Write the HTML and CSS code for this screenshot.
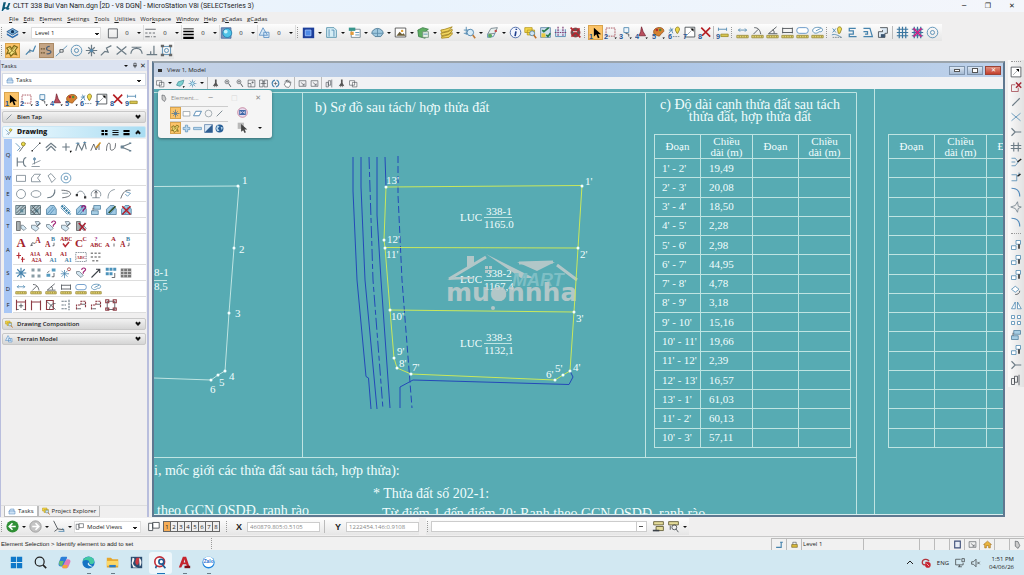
FILE: index.html
```html
<!DOCTYPE html>
<html lang="vi">
<head>
<meta charset="utf-8">
<title>CLTT 338 Bui Van Nam.dgn [2D - V8 DGN] - MicroStation V8i (SELECTseries 3)</title>
<link rel="stylesheet" href="styles.css">
</head>
<body>
<svg class="sprite" aria-hidden="true">
<symbol id="logo" viewBox="0 0 16 16"><path fill="#0b5a78" d="M4 2h4L6 9c1 2 3 1 4-1l2-5h3l-3 8 2 1-2 2H9l-1-2-3 1-2 3H1z"/></symbol>
<symbol id="level" viewBox="0 0 16 16"><path fill="#7fb6dd" stroke="#1f4f86" d="M1 7l7-4 7 4-7 4z"/><path fill="#2b6cb0" d="M1 9l7 4 7-4v2l-7 4-7-4z"/><circle cx="8" cy="7" r="2" fill="#12355c"/></symbol>
<symbol id="sq" viewBox="0 0 16 16"><path class="k" fill="#fff" d="M2.500 2.500h12v12h-12z"/></symbol>
<symbol id="dash" viewBox="0 0 16 16"><path class="k" d="M1 3h14"/><path class="k" stroke-dasharray="3 2" d="M1 8h14"/><path class="k" stroke-dasharray="6 2 1 2" d="M1 13h14"/></symbol>
<symbol id="thick" viewBox="0 0 16 16"><path d="M1 2h14v1H1zM1 5h14v2H1zM1 9h14v2H1zM1 13h14v3H1z"/></symbol>
<symbol id="sphere" viewBox="0 0 16 16"><path fill="#7c93bb" stroke="#42659c" d="M1 1h13v14H1z"/><circle cx="9" cy="8" r="6" fill="#4fc3e8" stroke="#1a78a8"/><circle cx="7" cy="6" r="2.500" fill="#c8f2fb"/></symbol>
<symbol id="tri" viewBox="0 0 16 16"><path fill="#d7e8f7" stroke="#4d86bf" d="M6 1l6 10H1zM7 7h7v7H7z"/></symbol>
<symbol id="cube" viewBox="0 0 16 16"><path fill="#1d3f9b" d="M1 2h14v13H1z"/><path fill="#4f8be8" stroke="#a4c9ff" d="M4 5h7v7H4z"/></symbol>
<symbol id="doc" viewBox="0 0 16 16"><path fill="#d6eef6" stroke="#4c8ca8" d="M2 2h9l3 3v9H2z"/><path class="b" d="M5 4v9M8 5h3v8"/></symbol>
<symbol id="refs" viewBox="0 0 16 16"><path fill="#fff" stroke="#6b7f8a" d="M4 4h11v10H4z"/><path fill="#38958c" d="M1 2h8v4H1z"/><path fill="#e39b3c" d="M3 7h4v4H3z"/><path class="b" d="M9 8h5M9 11h5"/></symbol>
<symbol id="globe" viewBox="0 0 16 16"><path fill="#9fc8df" stroke="#42718e" d="M1 9c0-3 3-6 7-6s7 3 7 6l-3 4H5z"/><path stroke="#5d8ba8" fill="none" d="M1 9h14M8 3v10"/></symbol>
<symbol id="img" viewBox="0 0 16 16"><path fill="#fff" stroke="#444" d="M1.500 2.500h13v11h-13z"/><path fill="#6b5d36" d="M3 12l4-5 3 3 2-1 2 3z"/><circle cx="10" cy="6" r="1.500" fill="#e0a23a"/></symbol>
<symbol id="green" viewBox="0 0 16 16"><path fill="#5fae62" stroke="#377c45" d="M1 5l6-3 7 2-4 3v8l-8-2z"/><path fill="#eaf4e8" stroke="#6f8f76" d="M7 7h7v7H7z"/><path class="b" d="M8 10h5"/></symbol>
<symbol id="layers" viewBox="0 0 16 16"><path fill="#f1d65f" stroke="#a3821a" d="M1 5l5-1 9-3-4 5-9 2zM1 9l9-2 5-3v2l-4 4-9 2zM2 13l8-2 5-3v2l-4 4-9 1z"/></symbol>
<symbol id="mag" viewBox="0 0 16 16"><path class="b" d="M1 5h9M4 1v10M1 9h4"/><circle cx="9" cy="8" r="4" fill="#d9ecf7" stroke="#3c78a6"/><path stroke="#c07a35" stroke-width="2" d="M12 11l3 4"/></symbol>
<symbol id="flag" viewBox="0 0 16 16"><path fill="#e6f0ee" stroke="#6c7b85" d="M2 10l4-7 8-1-3 7z"/><path class="b" d="M2 10v4l7-1 2-4"/><circle cx="5" cy="12" r="2.500" fill="#5fa85e"/><circle cx="12" cy="6" r="1.500" fill="#c34e4e"/></symbol>
<symbol id="info" viewBox="0 0 16 16"><circle cx="8" cy="8" r="6.500" fill="#f2f6ff" stroke="#37599d"/><path stroke="#1f3f8e" stroke-width="2" d="M8.500 6.500l-1 6M9 3.500v1.500"/></symbol>
<symbol id="ylook" viewBox="0 0 16 16"><path fill="#f5d84c" stroke="#b99a1c" d="M1 2h9v6H1zM4 5h9v6H4z"/><circle cx="10" cy="9" r="3" fill="#cfe4f3" stroke="#5283aa"/><path stroke="#c0722a" stroke-width="2" d="M12 11l3 4"/></symbol>
<symbol id="cells" viewBox="0 0 16 16"><path fill="#cfe0f0" stroke="#5d82a6" d="M2 2h12v12H2z"/><path fill="#e8ca43" d="M3 9h5v5H3z"/><path stroke="#267a4a" fill="none" stroke-width="2" d="M4 5l2 2 6-5M9 11l2 2 3-4"/></symbol>
<symbol id="fence" viewBox="0 0 16 16"><path fill="#dfe9f5" stroke="#4683ad" d="M2 4v9h12V4"/><path stroke="#7c3d75" stroke-width="1.500" fill="none" stroke-dasharray="2 1" d="M5 1v12M11 1v12M1 8h14"/></symbol>
<symbol id="noent" viewBox="0 0 16 16"><circle cx="8" cy="8" r="5.500" fill="#675353" stroke="#96252b"/><path stroke="#b8222b" stroke-width="2" d="M2 2l12 12M13 3L3 13"/><path stroke="#fff" d="M5 7h5"/></symbol>
<symbol id="n1" viewBox="0 0 16 16"><path d="M6 2v11l3-3 2 5 2-1-2-4h4z"/><text class="num" x="0" y="16">1</text></symbol>
<symbol id="n2" viewBox="0 0 16 16"><path class="r" stroke-dasharray="2 1" d="M2.500 2.500h11v10h-11z"/><text class="num" x="0" y="16">2</text><path d="M13 14h3l-2 2z"/></symbol>
<symbol id="n3" viewBox="0 0 16 16"><path fill="#eef5fb" stroke="#4683ad" d="M6 2h6v6H6z"/><path class="k" d="M8 9l4 1v3"/><text class="num" x="0" y="16">3</text><path d="M13 14h3l-2 2z"/></symbol>
<symbol id="n4" viewBox="0 0 16 16"><path fill="#ba4f5d" stroke="#7c2838" d="M8 1l2 6 3 5H5l2-5z"/><text class="num" x="0" y="16">4</text><path d="M13 14h3l-2 2z"/></symbol>
<symbol id="n5" viewBox="0 0 16 16"><path fill="#d68231" stroke="#95521c" d="M2 7c0-5 9-7 12-3 2 4-2 4-3 6s-2 3-4 2-5-1-5-5z"/><circle cx="6" cy="5" r="1.500" fill="#b52a30"/><circle cx="10" cy="5" r="1.500" fill="#4b8a3c"/><text class="num" x="0" y="16">5</text><path d="M13 14h3l-2 2z"/></symbol>
<symbol id="n6" viewBox="0 0 16 16"><path class="b" d="M1 5h5M3 2l3 7M1 9l5-6"/><path fill="#ecd84a" stroke="#8e7d22" d="M9 5c0-5 6-5 5 0l-2 4h-1z"/><path class="g" stroke-dasharray="2 1" d="M6 13h8"/><text class="num" x="0" y="16">6</text></symbol>
<symbol id="n7" viewBox="0 0 16 16"><path fill="#fff" stroke="#3c4248" d="M2.500 1.500h12v12h-12z"/><path class="k" stroke-dasharray="1 1" d="M5 11l6-6"/><path d="M9 3h4v4z"/><text class="num" x="0" y="16">7</text></symbol>
<symbol id="side7" viewBox="0 0 16 16"><path fill="#fff" stroke="#3c4248" d="M1.500 1.500h13v13h-13z"/><path class="k" stroke-dasharray="1 1" d="M4 12l7-7"/><path d="M8 4h4v4z"/></symbol>
<symbol id="n8" viewBox="0 0 16 16"><path stroke="#b51d22" stroke-width="2" d="M4 2l11 11M15 2L5 12"/><text class="num" x="0" y="16">8</text></symbol>
<symbol id="n9" viewBox="0 0 16 16"><path class="b" d="M3 4h10M3 2v4M13 2v4"/><path fill="#d9c64e" stroke="#9b8a28" d="M6 10h9v3H6z"/><text class="num" x="0" y="16">9</text></symbol>
<symbol id="rule" viewBox="0 0 16 16"><path fill="#e8d873" stroke="#968738" d="M1 11.500h14v3H1z"/><path stroke="#968738" d="M4 12v2M7 12v2M10 12v2M13 12v2"/></symbol>
<symbol id="m1" viewBox="0 0 16 16"><path class="b" d="M3 5h10M5 3L3 5l2 2M11 3l2 2-2 2"/><use href="#rule"/></symbol>
<symbol id="m2" viewBox="0 0 16 16"><path class="k" d="M4 2c5 0 7 3 8 8M3 10l6-6"/><use href="#rule"/></symbol>
<symbol id="m3" viewBox="0 0 16 16"><path class="k" d="M13 1L3 9.500h11M8 5c2 0 2 2 2 4"/><use href="#rule"/></symbol>
<symbol id="m4" viewBox="0 0 16 16"><path class="k" d="M2 2v7M14 2v7M2 3h12M2 8h12"/><use href="#rule"/></symbol>
<symbol id="m5" viewBox="0 0 16 16"><rect x="1" y="2" width="14" height="7" rx="3" fill="#fff" stroke="#4d86bf"/><use href="#rule"/></symbol>
<symbol id="m6" viewBox="0 0 16 16"><path fill="#fff" stroke="#4683ad" d="M2 6c0-4 5-5 10-4 4 2 2 6-2 5-3 3-7 2-8-1zM6 6l6-3"/><use href="#rule"/></symbol>
<symbol id="bulb" viewBox="0 0 16 16"><path class="b" d="M2 3l4 5M6 3L2 8M1 11c4-2 8 1 12 3"/><path fill="#efdd55" stroke="#8e7d22" d="M8 4c0-4 5-4 5 0l-2 5H9z"/><path class="g" stroke-dasharray="2 1" d="M2 14h11"/></symbol>
<symbol id="e1" viewBox="0 0 16 16"><path class="b" stroke-width="1.500" d="M12 3H4v3h5v4H4v3h9"/></symbol>
<symbol id="e2" viewBox="0 0 16 16"><path class="b" stroke-width="1.500" d="M3 3h8l3 10H3M3 7h5v3H5"/></symbol>
<symbol id="e3" viewBox="0 0 16 16"><path fill="#dce9f4" stroke="#3c4248" d="M5 2h9v7h-3v5H3V7h5V5"/><path d="M6 10h5v4H6z" fill="#3c5570"/></symbol>
<symbol id="grid" viewBox="0 0 16 16"><path stroke="#39759f" stroke-width="1.500" d="M4 1v14M8 1v14M12 1v14M1 4h14M1 8h14M1 12h14"/></symbol>
<symbol id="gridx" viewBox="0 0 16 16"><use href="#grid"/><path stroke="#c82488" stroke-width="2" d="M3 3l10 10M13 3L3 13"/></symbol>
<symbol id="target" viewBox="0 0 16 16"><circle class="b" cx="8" cy="8" r="6.500"/><circle class="b" cx="8" cy="8" r="2.500"/></symbol>
<symbol id="s1" viewBox="0 0 16 16"><path stroke="#806a19" stroke-width="1.500" fill="#f5e47f" d="M1 5l4-2 2 3 3-4 4 2-3 4 2 5-4-1-3 3-2-4-3 1 2-4z"/><path stroke="#806a19" d="M4 5l8 7M11 4l-7 8"/></symbol>
<symbol id="s2" viewBox="0 0 16 16"><path class="b" stroke-width="1.500" d="M1 13l5-5 4 1 3-7"/><path class="g" d="M6 6v5"/></symbol>
<symbol id="s3" viewBox="0 0 16 16"><path stroke="#67502e" fill="none" stroke-dasharray="2 1" stroke-width="1.500" d="M1 6h5M1 11h6"/><path stroke="#4b5f78" fill="none" stroke-width="1.500" d="M12 3c-5 0-5 5-1 5s3 5-3 4"/></symbol>
<symbol id="s4" viewBox="0 0 16 16"><path class="b" d="M1 15L15 2"/><path fill="#fff" stroke="#3c4248" d="M6 7h4v3H6z"/></symbol>
<symbol id="s6" viewBox="0 0 16 16"><path class="g" stroke-width="1.500" d="M8 1v14M1 8h14M4 4l8 8M12 4l-8 8"/><circle cx="8" cy="8" r="2" fill="#4f87ae"/></symbol>
<symbol id="s7" viewBox="0 0 16 16"><path class="g" stroke-width="1.500" d="M1 14l5-5 4 1-2-5 6-3"/></symbol>
<symbol id="s8" viewBox="0 0 16 16"><path class="g" stroke-width="1.500" d="M2 3l12 10M14 3L2 13"/></symbol>
<symbol id="s9" viewBox="0 0 16 16"><path class="g" stroke-width="1.500" d="M1 12c1-9 13-9 14 0M2 4h12"/></symbol>
<symbol id="s10" viewBox="0 0 16 16"><path class="g" stroke-width="1.500" d="M11 2v11M2 13h13M7 9v4"/></symbol>
<symbol id="s11" viewBox="0 0 16 16"><path class="b" d="M3 3h10v10H3z"/><circle class="b" cx="8" cy="8" r="2.500"/><path fill="#666" d="M1 1h4v3H1zM11 1h4v3h-4zM1 12h4v3H1zM11 12h4v3h-4z"/></symbol>
<symbol id="line" viewBox="0 0 16 16"><path class="g" stroke-width="1.500" d="M3 13L13 3"/></symbol>
<symbol id="pen" viewBox="0 0 16 16"><path class="b" d="M1 3l6 6-4 4"/><path class="k" d="M6 14l8-11"/><circle cx="11" cy="4" r="2.500" fill="#eadb4b" stroke="#8d7e1e"/></symbol>
<symbol id="sline" viewBox="0 0 16 16"><path class="g" d="M3 13L13 3"/><path fill="#333" d="M2 12h2v2H2zM12 2h2v2h-2z"/></symbol>
<symbol id="chev" viewBox="0 0 16 16"><path class="g" stroke-width="1.500" d="M1 9l7-6 7 6M2 13l6-6 6 6"/></symbol>
<symbol id="plus" viewBox="0 0 16 16"><path class="g" stroke-width="1.500" d="M8 3v10M3 8h10"/><path d="M13 13h3l-2 3z"/></symbol>
<symbol id="zig" viewBox="0 0 16 16"><path class="g" stroke-width="1.500" d="M1 13L4 3l5 9 4-10 2 9"/><path class="b" d="M1 3h5M11 2h4"/></symbol>
<symbol id="zigp" viewBox="0 0 16 16"><path class="k" d="M1 13L5 4l3 8 4-8v8"/><path stroke="#d19422" stroke-width="2" d="M8 9l6-7"/></symbol>
<symbol id="curve" viewBox="0 0 16 16"><path class="k" d="M2 13C2 1 7 1 7 6s0 7 3 6 4-3 4-9"/></symbol>
<symbol id="fork" viewBox="0 0 16 16"><path class="g" stroke-width="1.500" d="M14 3L2 8l12 5"/><path fill="#6a8394" d="M1 6h4v4H1zM12 2h3v2h-3zM12 12h3v2h-3z"/></symbol>
<symbol id="hh" viewBox="0 0 16 16"><path class="g" stroke-width="1.500" d="M3 2v12M3 8h8M15 2c-5 1-5 11 0 12"/></symbol>
<symbol id="tan" viewBox="0 0 16 16"><path class="g" d="M2 14h11M3 11L14 6M6 2v9"/><circle cx="6" cy="4" r="1.500" class="b"/></symbol>
<symbol id="rect" viewBox="0 0 16 16"><path fill="#fff" stroke="#6c7b85" d="M2 4.500h12v8H2z"/></symbol>
<symbol id="poly" viewBox="0 0 16 16"><path fill="#fff" stroke="#6c7b85" d="M2 13V8l4-5h8l-4 5 4 5z"/></symbol>
<symbol id="rot" viewBox="0 0 16 16"><path fill="#fff" stroke="#6c7b85" d="M4 5l4-3 6 7-5 5-2-4z"/></symbol>
<symbol id="circ" viewBox="0 0 16 16"><circle class="g" cx="8" cy="8" r="6"/></symbol>
<symbol id="elli" viewBox="0 0 16 16"><ellipse class="g" cx="8" cy="8" rx="6.500" ry="4.500"/></symbol>
<symbol id="arc" viewBox="0 0 16 16"><path class="g" stroke-width="1.500" d="M13 2c1 6-3 11-10 11"/></symbol>
<symbol id="arc2" viewBox="0 0 16 16"><path class="k" d="M2 3c16 0 16 9 1 10"/><path class="g" d="M3 7h8"/></symbol>
<symbol id="arc3" viewBox="0 0 16 16"><path class="g" d="M2 9c3-7 9-7 12 3"/><path fill="#333" d="M1 8h3v3H1zM12 11h3v3h-3z"/></symbol>
<symbol id="arc4" viewBox="0 0 16 16"><path class="g" d="M2 11C-1 0 17 0 14 11M3 13h10"/><path class="k" d="M8 4v9M6 7l2-3 2 3"/></symbol>
<symbol id="arc5" viewBox="0 0 16 16"><path class="g" d="M4 14C4 7 7 3 13 2"/></symbol>
<symbol id="arcq" viewBox="0 0 16 16"><path class="k" d="M1 14C4 5 8 2 14 3"/><path class="b" d="M8 5l6 2-4 4-3-3"/></symbol>
<symbol id="hat" viewBox="0 0 16 16"><path fill="#b3c8cf" stroke="#4c646e" d="M1 2h13v12H1z"/><path class="k" d="M2 12L12 2M4 14L14 4M2 7l5-5"/><path fill="#5e8796" d="M7 7h4v4H7z"/></symbol>
<symbol id="hat2" viewBox="0 0 16 16"><use href="#hat"/><path class="k" d="M3 3l10 11M1 8l6 6"/></symbol>
<symbol id="patt" viewBox="0 0 16 16"><path fill="#9fc9e4" stroke="#4b7c9c" d="M2 7l5-5h5l3 5v7H2z"/><path class="b" d="M3 13l8-9M7 13l6-7"/></symbol>
<symbol id="diag" viewBox="0 0 16 16"><path stroke="#3d82a8" stroke-width="3" stroke-dasharray="3 1" d="M2 2l12 12"/><path class="b" d="M1 5l9 9M5 1l9 9"/></symbol>
<symbol id="pattq" viewBox="0 0 16 16"><use href="#patt"/><path stroke="#8c267a" fill="none" stroke-width="2" d="M9 5c0-4 6-3 5 0l-3 3v2"/></symbol>
<symbol id="pattm" viewBox="0 0 16 16"><path fill="#a8cee4" stroke="#4b7c9c" d="M5 2h9v5H5zM2 9h9v5H2z"/><path class="k" d="M4 9V5"/></symbol>
<symbol id="pattp" viewBox="0 0 16 16"><use href="#patt"/><path stroke="#314c21" stroke-width="2" d="M5 12l9-9"/></symbol>
<symbol id="pattx" viewBox="0 0 16 16"><use href="#patt"/><path stroke="#b5202b" stroke-width="2" d="M3 3l11 11M14 3L3 14"/></symbol>
<symbol id="tag" viewBox="0 0 16 16"><path fill="#a9b0b2" stroke="#555" d="M2 2h5v12H2z"/><path fill="#d4e7f2" stroke="#6c7b85" d="M8 7h3l4 4-3 3-4-3z"/></symbol>
<symbol id="tag2" viewBox="0 0 16 16"><path fill="#d4e7f2" stroke="#6c7b85" d="M2 7h5l5 4-4 4-6-4zM7 2h5l2 3-4 3z"/><path class="k" d="M9 9l4-5"/></symbol>
<symbol id="tagq" viewBox="0 0 16 16"><path fill="#d4e7f2" stroke="#6c7b85" d="M2 6h4l5 5-3 3-6-5z"/><path stroke="#a02676" fill="none" stroke-width="1.500" d="M9 4c0-4 6-3 5 0l-3 3v2"/></symbol>
<symbol id="tagx" viewBox="0 0 16 16"><use href="#tag"/><path stroke="#a61f30" stroke-width="2" d="M5 4l9 10M14 4L6 14"/></symbol>
<symbol id="A" viewBox="0 0 16 16"><text class="ta" x="2" y="14" font-size="17">A</text></symbol>
<symbol id="A2" viewBox="0 0 16 16"><text class="ta" x="7" y="9" font-size="10">A</text><path class="k" d="M1 13l2-4 4 1M1 13l3-1"/></symbol>
<symbol id="A3" viewBox="0 0 16 16"><text class="ta" x="0" y="15" font-size="10">A</text><text class="tb" x="8" y="7" font-size="8">B</text><path class="k" d="M12 9v4h-2"/></symbol>
<symbol id="A4" viewBox="0 0 16 16"><text class="ta" x="0" y="7" font-size="8">ABC</text><path stroke="#b62c35" stroke-width="2" fill="none" d="M4 10l3 4 5-6"/></symbol>
<symbol id="A5" viewBox="0 0 16 16"><text class="ta" x="0" y="15" font-size="15">C</text><text class="ta" x="10" y="7" font-size="8">C</text></symbol>
<symbol id="A6" viewBox="0 0 16 16"><text class="ta" x="0" y="15" font-size="8">ABC</text><text class="tm" x="6" y="7" font-size="8">?</text></symbol>
<symbol id="A7" viewBox="0 0 16 16"><text class="ta" x="0" y="15" font-size="9">A</text><text class="ta" x="8" y="7" font-size="9">A</text><path class="k" d="M12 10v4"/></symbol>
<symbol id="A8" viewBox="0 0 16 16"><path stroke="#b62c35" stroke-width="1.500" d="M5 2v8M2 6h6M10 8v7M8 11h5"/></symbol>
<symbol id="A9" viewBox="0 0 16 16"><text class="ta" x="0" y="7" font-size="7">A1A</text><text class="ta" x="2" y="15" font-size="7">A2A</text></symbol>
<symbol id="A10" viewBox="0 0 16 16"><text class="ta" x="0" y="7" font-size="8">A1</text><text class="tb" x="6" y="15" font-size="8">A1</text></symbol>
<symbol id="A11" viewBox="0 0 16 16"><path class="g" stroke-dasharray="2 1" d="M1 2h14v12H1z"/><text class="ta" x="2" y="11" font-size="6">ABC</text></symbol>
<symbol id="A12" viewBox="0 0 16 16"><path stroke="#888" stroke-width="2" stroke-dasharray="3 2" d="M1 3h14M1 8h14M3 13h10"/></symbol>
<symbol id="c1" viewBox="0 0 16 16"><path class="b" stroke-width="1.500" d="M8 1v14M1 8h14M3 3l10 10M13 3L3 13"/></symbol>
<symbol id="c2" viewBox="0 0 16 16"><path stroke="#899da6" stroke-width="4" stroke-dasharray="4 4" d="M2 4h12M2 12h12"/></symbol>
<symbol id="c3" viewBox="0 0 16 16"><path stroke="#559bc0" stroke-width="4" d="M9 4h5M2 11h5"/><path class="k" d="M12 8v5h-3M6 5L3 8"/></symbol>
<symbol id="c4" viewBox="0 0 16 16"><path class="b" d="M6 4v11M1 9h11M2 5l8 8M10 5l-8 8"/><circle cx="12" cy="3" r="2" fill="#fff" stroke="#933"/></symbol>
<symbol id="c6" viewBox="0 0 16 16"><path class="k" stroke-width="1.500" d="M2 14L13 3M8 3h5v5"/></symbol>
<symbol id="c7" viewBox="0 0 16 16"><path stroke="#4c92ba" stroke-width="4" stroke-dasharray="4 1" d="M1 3h14M1 9h9"/><path class="k" d="M13 8v6h-4"/></symbol>
<symbol id="c8" viewBox="0 0 16 16"><path fill="#777" d="M1 2h14v12H1z"/><path stroke="#ddd" d="M1 6h14M1 10h14M5 2v12M10 2v12"/></symbol>
<symbol id="d1" viewBox="0 0 16 16"><path class="dr" d="M2 1v14M14 1v14M2 4h12"/><path class="k" d="M5 9h6M8 6v6M2 14h3M11 14h3"/></symbol>
<symbol id="d2" viewBox="0 0 16 16"><path class="dr" d="M2 2v13M14 2v13M2 4h12"/></symbol>
<symbol id="d3" viewBox="0 0 16 16"><path class="dr" d="M2 2h9v12H2z"/><path class="k" d="M2 3l12 11M6 14c0-5 3-8 8-8"/></symbol>
<symbol id="d4" viewBox="0 0 16 16"><path class="g" stroke-width="1.500" stroke-dasharray="3 1" d="M2 3h7M2 8h6M2 13h7M12 1v14"/></symbol>
<symbol id="d5" viewBox="0 0 16 16"><path class="dr" stroke-dasharray="3 1" d="M2 14V8h6V3h6v9"/><path class="k" d="M3 13h5M9 7h5"/></symbol>
<symbol id="d7" viewBox="0 0 16 16"><path class="k" d="M3 3h10v11H3z"/><path class="dr" d="M1 1h4v4H1zM11 1h4v4h-4zM1 12h4v3H1zM11 12h4v3h-4z"/></symbol>
<symbol id="v1" viewBox="0 0 16 16"><path fill="#fff" stroke="#3c4248" d="M1 3h9v8H1zM6 6h8v8H6z"/></symbol>
<symbol id="v2" viewBox="0 0 16 16"><path fill="#7ed0cf" stroke="#237480" d="M1 11l3-6 10-3-2 7-5 4z"/><path d="M12 13h4l-3 3z"/></symbol>
<symbol id="sun" viewBox="0 0 16 16"><path class="b" d="M8 1v14M1 8h14M3 3l10 10M13 3L3 13"/><circle cx="8" cy="8" r="3" fill="#bfe5f4" stroke="#3a84aa"/></symbol>
<symbol id="brush" viewBox="0 0 16 16"><path fill="#555" d="M7 1h3v6l3 6-3-1v3l-2-3-2 3v-3l-3 1 4-6z"/></symbol>
<symbol id="zin" viewBox="0 0 16 16"><circle class="k" cx="7" cy="5" r="3.500"/><path class="k" stroke-width="1.500" d="M10 8l4 6M5 5h4"/></symbol>
<symbol id="fit" viewBox="0 0 16 16"><path class="k" d="M2 2h12v12H2zM2 8h5v6M8 6h4M10 4v4"/></symbol>
<symbol id="fit2" viewBox="0 0 16 16"><path class="k" d="M1 2h6v12H1zM9 2h6v12H9zM3 8h10M6 5h5"/></symbol>
<symbol id="rotv" viewBox="0 0 16 16"><path class="b" stroke-width="2" d="M7 2C0 4 1 12 6 14M9 14c7-2 6-10 1-12"/><path class="k" d="M5 8h6M8 5v6"/></symbol>
<symbol id="hand" viewBox="0 0 16 16"><path fill="#fff" stroke="#3c4248" d="M5 14L2 9l2-1V4l2-2 1 4V2h2v4l2-3v4l3-2-1 6-3 4z"/></symbol>
<symbol id="prev" viewBox="0 0 16 16"><path class="k" d="M2 3h12v10H2zM5 6l6 5M11 8v3H8"/></symbol>
<symbol id="bars" viewBox="0 0 16 16"><path class="k" d="M2 6h4v8H2zM6 3h4v8H6zM12 1v14"/></symbol>
<symbol id="xr" viewBox="0 0 16 16"><path stroke="#a62835" stroke-width="2" d="M8 2l7 7M15 2L8 9"/><path class="r" d="M7 5H2v9h9V9"/></symbol>
<symbol id="xx" viewBox="0 0 16 16"><path class="b" d="M2 3l12 10M14 3L2 13"/></symbol>
<symbol id="yy" viewBox="0 0 16 16"><path class="g" stroke-width="1.500" d="M2 3l5 5-5 5M7 8h8"/></symbol>
<symbol id="hash" viewBox="0 0 16 16"><path class="g" stroke-width="1.500" d="M5 2v12M11 2v12M1 6h14M1 10h14"/></symbol>
<symbol id="rt1" viewBox="0 0 16 16"><path class="b" d="M2 3h5l4 5-4 5H2M2 8h5"/><path stroke="#222" stroke-width="2" d="M10 8l5-4"/></symbol>
<symbol id="rt2" viewBox="0 0 16 16"><path class="b" d="M2 5h7v8H2M12 2v5"/><path stroke="#222" stroke-width="2" d="M10 7l4-3"/></symbol>
<symbol id="fil" viewBox="0 0 16 16"><path stroke="#5089bc" stroke-width="1.500" fill="none" d="M2 3c7 0 11 4 11 11"/></symbol>
<symbol id="star4" viewBox="0 0 16 16"><path class="g" d="M1 8l6-2 3-5 1 6 4 1-4 2-1 5-3-5z"/></symbol>
<symbol id="cp" viewBox="0 0 16 16"><path fill="#fff" stroke="#4683ad" d="M8 2h6v5H8zM2 9h6v5H2z"/><path stroke="#222" stroke-width="2" d="M12 7v6"/></symbol>
<symbol id="rotc" viewBox="0 0 16 16"><path fill="#fff" stroke="#4683ad" d="M2 7l5-4 5 4-5 4z"/><path class="k" d="M13 9c0 4-3 5-6 5"/></symbol>
<symbol id="mirr" viewBox="0 0 16 16"><path fill="#fff" stroke="#4683ad" d="M2 13L7 4v9zM10 13V4l5 9z"/></symbol>
<symbol id="arr" viewBox="0 0 16 16"><path fill="#fff" stroke="#4683ad" d="M2 2h4v4H2zM10 2h4v4h-4zM2 10h4v4H2zM10 10h4v4h-4z"/></symbol>
<symbol id="back" viewBox="0 0 16 16"><circle cx="8" cy="8" r="7.500" fill="#2f8f35"/><path stroke="#fff" stroke-width="2" fill="none" d="M12 8H4M8 4L4 8l4 4"/></symbol>
<symbol id="fwd" viewBox="0 0 16 16"><circle cx="8" cy="8" r="7" fill="#c4c4c4" stroke="#999"/><path stroke="#fff" stroke-width="2" fill="none" d="M4 8h8M8 4l4 4-4 4"/></symbol>
<symbol id="acs" viewBox="0 0 16 16"><path class="k" d="M2 1l5 10 8 1M7 11l-4 3"/><path class="b" d="M8 14h7l-2-4"/></symbol>
<symbol id="views" viewBox="0 0 16 16"><path fill="#fff" stroke="#3c4248" d="M2 4h5v9H2zM7 3h8v7H7z"/></symbol>
<symbol id="box" viewBox="0 0 16 16"><path fill="#cfe3f5" stroke="#4f80b8" d="M2 9l3-5h7v5M2 8h12v6H2z"/></symbol>
<symbol id="send" viewBox="0 0 16 16"><path stroke="#59542d" fill="#e4dc9a" d="M2 2h12v4H2zM5 8h9v5H5z"/><path class="k" stroke-width="2" d="M1 13h8"/></symbol>
<symbol id="filt" viewBox="0 0 16 16"><path stroke="#59542d" fill="#e4dc9a" d="M2 2h12v4H2z"/><circle cx="9" cy="9" r="3" class="k"/><path class="k" d="M11 11l3 4M4 7v5"/></symbol>
<symbol id="d4view" viewBox="0 0 16 16"><path fill="#dbe9f5" stroke="#2f5d90" d="M1 1h14v14H1z"/><path fill="#2f5d90" d="M15 1v14H1z"/></symbol>
<symbol id="pill" viewBox="0 0 16 16"><path fill="#b9d8f0" stroke="#447eac" d="M1 6h14v4H1z"/></symbol>
<symbol id="para" viewBox="0 0 16 16"><path fill="#fff" stroke="#447eac" stroke-width="1.500" d="M1 12l4-8h10l-4 8z"/></symbol>
<symbol id="bplus" viewBox="0 0 16 16"><path fill="#b9d8f0" stroke="#447eac" d="M6 2h4v4h4v4h-4v4H6v-4H2V6h4z"/></symbol>
<symbol id="earth" viewBox="0 0 16 16"><circle cx="8" cy="8" r="7" fill="#285e96"/><path fill="#b8d8ed" d="M4 2l4 2-3 4 3 4-4 1-2-5zM10 5l4 1-2 5z"/></symbol>
<symbol id="circx" viewBox="0 0 16 16"><circle cx="8" cy="8" r="7" fill="#e9dcee" stroke="#b86585"/><path stroke="#4068a8" fill="none" stroke-width="1.500" d="M4 5h8v6H4zM5 5l6 6M11 5l-6 6"/></symbol>
<symbol id="cur" viewBox="0 0 16 16"><path fill="#b9b9b9" d="M1 1h9v9H1z"/><path fill="#444" d="M6 3v11l3-2 2 4 2-1-2-4h4z"/></symbol>
<symbol id="attach" viewBox="0 0 16 16"><path fill="#ccc" stroke="#3c4248" d="M4 2l5 1 3 7-3 5-5-4z"/></symbol>
<symbol id="lock" viewBox="0 0 16 16"><path class="k" d="M5 8V4h6v4"/><path fill="#d9b93a" stroke="#6b5a18" d="M3 8h10v5H3z"/></symbol>
<symbol id="page" viewBox="0 0 16 16"><path fill="#e8edf5" stroke="#40507a" stroke-width="2" d="M3 2h10v12H3z"/></symbol>
<symbol id="home" viewBox="0 0 16 16"><path fill="#e8b33d" stroke="#a06b12" d="M1 8l7-6 7 6h-2v6h-3v-4H6v4H3V8z"/></symbol>
<symbol id="snap" viewBox="0 0 16 16"><path class="b" stroke-width="2" d="M2 13h9V4M9 4h5"/></symbol>
<symbol id="pin" viewBox="0 0 16 16"><path stroke="#111" stroke-width="1.500" fill="none" d="M5 2h6v7H5zM3 9h10M8 9v6"/></symbol>
<symbol id="win" viewBox="0 0 16 16"><path fill="#0f78c9" d="M1 1h6.500v6.500H1zM8.500 1H15v6.500H8.500zM1 8.500h6.500V15H1zM8.500 8.500H15V15H8.500z"/></symbol>
<symbol id="srch" viewBox="0 0 16 16"><circle cx="7" cy="7" r="5.500" fill="none" stroke="#222" stroke-width="1.500"/><path stroke="#222" stroke-width="2" d="M11 11l4 4"/></symbol>
<symbol id="cop" viewBox="0 0 16 16"><path fill="#2d7fd8" d="M5 1h5c2 0 1 2 0 4L8 11c-1 2-2 2-4 2-3 0-4-2-3-5l2-5c0-1 1-2 2-2z"/><path fill="#e27bb6" d="M11 4h1c3 0 4 2 3 4l-2 5c-1 2-2 2-3 2H6c-1 0-1-2 0-3l3-6z"/><path fill="#6cbf6a" d="M2 6h5l-2 6H3c-2-1-2-4-1-6z"/><path fill="#f2a43a" d="M6 11h6l-1 4H7c-2 0-2-2-1-4z"/></symbol>
<symbol id="edge" viewBox="0 0 16 16"><circle cx="8" cy="8" r="7.500" fill="#1573c4"/><path fill="#43c9a4" d="M1 6c2-7 14-7 14 1 0 3-4 4-6 2 1-4-4-5-8-3z"/><path fill="#e8f7fb" d="M8 8c-2 1-1 5 5 5 2-1-4 0-5-5z"/></symbol>
<symbol id="fold" viewBox="0 0 16 16"><path fill="#e5a62c" d="M1 2h5l2 2h7v10H1z"/><path fill="#fcd766" d="M1 6h14v6H1z"/><path fill="#2b7cc6" d="M4 11h8v3H4z"/></symbol>
<symbol id="uni" viewBox="0 0 16 16"><path fill="#2b4d70" d="M1 1h14v14H1z"/><path fill="#f3f3f3" d="M3 2c4 0 2 4 1 6s2 6 6 6H4L2 9zM11 2c4 2 4 8 1 11z"/><path fill="#ce3a43" d="M8 2h4c-3 4 1 6-3 9-4-2-2-6-1-9z"/></symbol>
<symbol id="ms" viewBox="0 0 16 16"><circle cx="7" cy="7" r="6" fill="#fff" stroke="#c42d38" stroke-width="2"/><circle cx="9" cy="7" r="3" fill="#fff" stroke="#1f5c93" stroke-width="2"/><path stroke="#1f5c93" stroke-width="2" d="M10 10l4 5M3 12l-1 3"/></symbol>
<symbol id="acad" viewBox="0 0 16 16"><path fill="#c5242e" fill-rule="evenodd" d="M6 1h4l4 12h-3l-1-3H6l-2 4H1zM8 4L7 8h2z"/><path fill="#7e1018" d="M8 12h7v3H8z"/></symbol>
<symbol id="zalo" viewBox="0 0 16 16"><circle cx="8" cy="8" r="7.500" fill="#1f83dc"/><circle cx="8" cy="7" r="6.500" fill="#fff"/><text x="2" y="9" class="zt">Zalo</text></symbol>
<symbol id="tray" viewBox="0 0 16 16"><path stroke="#b2343c" stroke-width="2" fill="none" d="M13 5c-3-5-11-3-11 2 0 3 3 4 5 4M7 7h5"/><circle cx="11" cy="11" r="4.500" fill="#c92332"/><path stroke="#fff" d="M9 9l4 4"/></symbol>
<symbol id="net" viewBox="0 0 16 16"><path stroke="#222" fill="none" d="M9 2H1v9h12V8M5 14h6M7 11v3M11 1h4v5h-4z"/></symbol>
<symbol id="mute" viewBox="0 0 16 16"><path stroke="#222" fill="none" d="M1 6h3l4-4v12l-4-4H1zM10 6l4 4M14 6l-4 4"/></symbol>
</svg>

<header class="titlebar">
  <svg class="s10"><use href="#logo"/></svg><h1>CLTT 338 Bui Van Nam.dgn [2D - V8 DGN] - MicroStation V8i (SELECTseries 3)</h1>
  <div class="winbtns"><button aria-label="Minimize">─</button><button aria-label="Restore">❐</button><button aria-label="Close">✕</button></div>
</header>
<nav class="menubar">
  <a href="#"><u>F</u>ile</a><a href="#"><u>E</u>dit</a><a href="#">E<u>l</u>ement</a><a href="#"><u>S</u>ettings</a><a href="#"><u>T</u>ools</a><a href="#"><u>U</u>tilities</a><a href="#">Wor<u>k</u>space</a><a href="#"><u>W</u>indow</a><a href="#"><u>H</u>elp</a><a href="#">g<u>C</u>adas</a><a href="#">gC<u>a</u>das</a>
</nav>

<div class="row">
 <div class="bar">
  <i class="grip"></i><button class="i" aria-label="Levels"><svg><use href="#level"/></svg></button><i class="dn"></i>
  <select class="lvl" aria-label="Active level"><option>Level 1</option></select>
  <button class="attr"><svg><use href="#sq"/></svg><span>0</span><i class="dn"></i></button>
  <button class="attr"><svg><use href="#dash"/></svg><span>0</span><i class="dn"></i></button>
  <button class="attr"><svg><use href="#thick"/></svg><span>0</span><i class="dn"></i></button>
  <button class="attr"><svg><use href="#sphere"/></svg><span>0</span><i class="dn"></i></button>
  <button class="attr"><svg><use href="#tri"/></svg><span>0</span><i class="dn"></i></button>
 </div>
 <div class="bar">
  <i class="grip"></i>
  <button class="i" aria-label="Models"><svg><use href="#cube"/></svg></button><i class="dn"></i>
  <button class="i" aria-label="Document"><svg><use href="#doc"/></svg></button><i class="dn"></i>
  <button class="i" aria-label="References"><svg><use href="#refs"/></svg></button><i class="dn"></i>
  <button class="i" aria-label="Point clouds"><svg><use href="#globe"/></svg></button><i class="dn"></i>
  <button class="i" aria-label="Raster"><svg><use href="#img"/></svg></button><i class="dn"></i>
  <button class="i" aria-label="Level manager"><svg><use href="#green"/></svg></button><i class="dn"></i>
  <button class="i" aria-label="Level display"><svg><use href="#layers"/></svg></button><i class="dn"></i>
  <button class="i" aria-label="Explore"><svg><use href="#mag"/></svg></button><i class="dn"></i>
  <button class="i" aria-label="Saved views"><svg><use href="#flag"/></svg></button><i class="dn"></i>
  <button class="i" aria-label="Information"><svg><use href="#info"/></svg></button><button class="i" aria-label="Find"><svg><use href="#ylook"/></svg></button><button class="i" aria-label="Cells"><svg><use href="#cells"/></svg></button><button class="i" aria-label="Fence"><svg><use href="#fence"/></svg></button><button class="i" aria-label="Clear"><svg><use href="#noent"/></svg></button>
 </div>
 <div class="bar">
  <i class="grip"></i><button class="i on" aria-label="Element selection"><svg><use href="#n1"/></svg></button><button class="i" aria-label="Fences"><svg><use href="#n2"/></svg></button><button class="i" aria-label="Manipulate"><svg><use href="#n3"/></svg></button><button class="i w" aria-label="View"><svg><use href="#n4"/></svg></button><button class="i w" aria-label="Attributes"><svg><use href="#n5"/></svg></button><button class="i" aria-label="Groups"><svg><use href="#n6"/></svg></button><button class="i" aria-label="Modify"><svg><use href="#n7"/></svg></button><button class="i" aria-label="Delete"><svg><use href="#n8"/></svg></button><i class="sep"></i><button class="i" aria-label="Measure"><svg><use href="#n9"/></svg></button>
 </div>
 <div class="bar">
  <i class="grip"></i><button class="i" aria-label="Distance"><svg><use href="#m1"/></svg></button><button class="i" aria-label="Radius"><svg><use href="#m2"/></svg></button><button class="i" aria-label="Angle"><svg><use href="#m3"/></svg></button><button class="i" aria-label="Length"><svg><use href="#m4"/></svg></button><button class="i" aria-label="Area"><svg><use href="#m5"/></svg></button><button class="i" aria-label="Volume"><svg><use href="#m6"/></svg></button>
 </div>
 <div class="bar last">
  <i class="grip"></i><button class="i" aria-label="AccuDraw"><svg><use href="#bulb"/></svg></button><button class="i" aria-label="Add to group"><svg><use href="#e1"/></svg></button><button class="i" aria-label="Drop"><svg><use href="#e2"/></svg></button><button class="i" aria-label="Copy group"><svg><use href="#e3"/></svg></button><i class="sep"></i><button class="i" aria-label="Grid"><svg><use href="#grid"/></svg></button><button class="i" aria-label="Grid lock"><svg><use href="#gridx"/></svg></button><button class="i" aria-label="Target"><svg><use href="#target"/></svg></button>
 </div>
</div>
<div class="row">
 <div class="bar">
  <i class="grip"></i><button class="i on gap" aria-label="Snap"><svg><use href="#s1"/></svg></button><button class="i" aria-label="Nearest"><svg><use href="#s2"/></svg></button><button class="i brown" aria-label="Keypoint"><svg><use href="#s3"/></svg></button><button class="i" aria-label="Midpoint"><svg><use href="#s4"/></svg></button><button class="i" aria-label="Center"><svg><use href="#target"/></svg></button><button class="i" aria-label="Origin"><svg><use href="#s6"/></svg></button><button class="i" aria-label="Bisector"><svg><use href="#s7"/></svg></button><button class="i" aria-label="Intersection"><svg><use href="#s8"/></svg></button><button class="i" aria-label="Tangent"><svg><use href="#s9"/></svg></button><button class="i" aria-label="Perpendicular"><svg><use href="#s10"/></svg></button><button class="i" aria-label="Multi-snap"><svg><use href="#s11"/></svg></button>
 </div>
</div>

<main class="work">
 <aside class="panel">
  <div class="phead"><h2>Tasks</h2><i class="dn"></i><button aria-label="Pin"><svg><use href="#pin"/></svg></button><button aria-label="Close panel"><b>✕</b></button></div>
  <div class="combo"><svg><use href="#box"/></svg><select aria-label="Task list"><option>Tasks</option></select></div>
  <div class="nine">
   <button class="i on" aria-label="Selection"><svg><use href="#n1"/></svg></button><button class="i" aria-label="Fence tasks"><svg><use href="#n2"/></svg></button><button class="i" aria-label="Manipulate tasks"><svg><use href="#n3"/></svg></button><button class="i" aria-label="View tasks"><svg><use href="#n4"/></svg></button><button class="i" aria-label="Attribute tasks"><svg><use href="#n5"/></svg></button><button class="i" aria-label="Group tasks"><svg><use href="#n6"/></svg></button><button class="i" aria-label="Modify tasks"><svg><use href="#n7"/></svg></button><button class="i" aria-label="Delete task"><svg><use href="#n8"/></svg></button><button class="i" aria-label="Measure tasks"><svg><use href="#n9"/></svg></button>
  </div>
  <button class="acc"><svg><use href="#line"/></svg><span>Bien Tap</span><i class="cv"></i></button>
  <button class="acc open"><svg><use href="#pen"/></svg><b>Drawing</b><svg class="m" viewBox="0 0 16 16"><path d="M1 2h6v5H1zM9 2h6v5H9zM1 9h6v5H1zM9 9h6v5H9z"/></svg><svg class="m" viewBox="0 0 16 16"><path d="M1 2h14v2H1zM1 7h14v2H1zM1 12h14v2H1z"/></svg><svg class="m" viewBox="0 0 16 16"><path d="M1 2h14v5H1zM1 9h14v5H1z"/></svg><i class="cv up"></i></button>
  <div class="tasks">
   <div class="t"><kbd>Q</kbd><div><button class="i" aria-label="Smartline"><svg><use href="#pen"/></svg></button><button class="i" aria-label="Line"><svg><use href="#sline"/></svg></button><button class="i" aria-label="Multiline"><svg><use href="#chev"/></svg></button><button class="i" aria-label="Point"><svg><use href="#plus"/></svg></button><button class="i" aria-label="Stream"><svg><use href="#zig"/></svg></button><button class="i" aria-label="Freehand"><svg><use href="#zigp"/></svg></button><button class="i" aria-label="Curve"><svg><use href="#curve"/></svg></button><button class="i" aria-label="Bisect"><svg><use href="#fork"/></svg></button><button class="i" aria-label="Minimum line"><svg><use href="#hh"/></svg></button><button class="i" aria-label="Angle line"><svg><use href="#tan"/></svg></button></div></div>
   <div class="t"><kbd>W</kbd><div><button class="i" aria-label="Block"><svg><use href="#rect"/></svg></button><button class="i" aria-label="Shape"><svg><use href="#poly"/></svg></button><button class="i" aria-label="Orthogonal shape"><svg><use href="#rot"/></svg></button><button class="i" aria-label="Polygon"><svg><use href="#target"/></svg></button></div></div>
   <div class="t"><kbd>E</kbd><div><button class="i" aria-label="Circle"><svg><use href="#circ"/></svg></button><button class="i" aria-label="Ellipse"><svg><use href="#elli"/></svg></button><button class="i" aria-label="Arc"><svg><use href="#arc"/></svg></button><button class="i" aria-label="Half ellipse"><svg><use href="#arc2"/></svg></button><button class="i" aria-label="Quarter ellipse"><svg><use href="#arc3"/></svg></button><button class="i" aria-label="Arc radius"><svg><use href="#arc4"/></svg></button><button class="i" aria-label="Arc angle"><svg><use href="#arc5"/></svg></button><button class="i" aria-label="Arc axis"><svg><use href="#arcq"/></svg></button></div></div>
   <div class="t"><kbd>R</kbd><div><button class="i" aria-label="Hatch"><svg><use href="#hat"/></svg></button><button class="i" aria-label="Crosshatch"><svg><use href="#hat2"/></svg></button><button class="i" aria-label="Pattern area"><svg><use href="#patt"/></svg></button><button class="i" aria-label="Linear pattern"><svg><use href="#diag"/></svg></button><button class="i" aria-label="Show pattern"><svg><use href="#pattq"/></svg></button><button class="i" aria-label="Match pattern"><svg><use href="#pattm"/></svg></button><button class="i" aria-label="Change pattern"><svg><use href="#pattp"/></svg></button><button class="i" aria-label="Delete pattern"><svg><use href="#pattx"/></svg></button></div></div>
   <div class="t"><kbd>T</kbd><div><button class="i" aria-label="Attach tags"><svg><use href="#tag"/></svg></button><button class="i" aria-label="Edit tags"><svg><use href="#tag2"/></svg></button><button class="i" aria-label="Review tags"><svg><use href="#tagq"/></svg></button><button class="i" aria-label="Change tags"><svg><use href="#tag2"/></svg></button><button class="i" aria-label="Delete tags"><svg><use href="#tagx"/></svg></button></div></div>
   <div class="t"><kbd>A</kbd><div><button class="i" aria-label="Text"><svg><use href="#A"/></svg></button><button class="i" aria-label="Note"><svg><use href="#A2"/></svg></button><button class="i" aria-label="Edit text"><svg><use href="#A3"/></svg></button><button class="i" aria-label="Spelling"><svg><use href="#A4"/></svg></button><button class="i" aria-label="Text attributes"><svg><use href="#A5"/></svg></button><button class="i" aria-label="Display text"><svg><use href="#A6"/></svg></button><button class="i" aria-label="Match text"><svg><use href="#A7"/></svg></button><button class="i" aria-label="Change text"><svg><use href="#A3"/></svg></button><button class="i" aria-label="Text node"><svg><use href="#A8"/></svg></button><button class="i" aria-label="Increment text"><svg><use href="#A9"/></svg></button><button class="i" aria-label="Data fields"><svg><use href="#A10"/></svg></button><button class="i" aria-label="Copy field"><svg><use href="#A10"/></svg></button><button class="i" aria-label="Fill field"><svg><use href="#A11"/></svg></button><button class="i" aria-label="Auto fill"><svg><use href="#A12"/></svg></button></div></div>
   <div class="t"><kbd>S</kbd><div><button class="i" aria-label="Place cell"><svg><use href="#c1"/></svg></button><button class="i" aria-label="Cell matrix"><svg><use href="#c2"/></svg></button><button class="i" aria-label="Select cell"><svg><use href="#c3"/></svg></button><button class="i" aria-label="Define origin"><svg><use href="#c4"/></svg></button><button class="i" aria-label="Identify cell"><svg><use href="#tagq"/></svg></button><button class="i" aria-label="Place line terminator"><svg><use href="#c6"/></svg></button><button class="i" aria-label="Replace cells"><svg><use href="#c7"/></svg></button><button class="i" aria-label="Cell table"><svg><use href="#c8"/></svg></button></div></div>
   <div class="t"><kbd>D</kbd><div><button class="i" aria-label="Measure distance"><svg><use href="#m1"/></svg></button><button class="i" aria-label="Measure radius"><svg><use href="#m2"/></svg></button><button class="i" aria-label="Measure angle"><svg><use href="#m3"/></svg></button><button class="i" aria-label="Measure length"><svg><use href="#m4"/></svg></button><button class="i" aria-label="Measure area"><svg><use href="#m5"/></svg></button><button class="i" aria-label="Measure volume"><svg><use href="#m6"/></svg></button></div></div>
   <div class="t"><kbd>F</kbd><div><button class="i" aria-label="Dimension element"><svg><use href="#d1"/></svg></button><button class="i" aria-label="Linear dimension"><svg><use href="#d2"/></svg></button><button class="i" aria-label="Angular dimension"><svg><use href="#d3"/></svg></button><button class="i" aria-label="Ordinate dimension"><svg><use href="#d4"/></svg></button><button class="i" aria-label="Change dimension"><svg><use href="#d5"/></svg></button><button class="i" aria-label="Modify dimension"><svg><use href="#d5"/></svg></button><button class="i" aria-label="Tolerance"><svg><use href="#d7"/></svg></button></div></div>
  </div>
  <button class="acc"><svg><use href="#ylook"/></svg><span>Drawing Composition</span><i class="cv"></i></button>
  <button class="acc"><svg><use href="#tri"/></svg><span>Terrain Model</span><i class="cv"></i></button>
  <div class="tabs"><button class="sel"><svg><use href="#box"/></svg>Tasks</button><button><svg><use href="#ylook"/></svg>Project Explorer</button></div>
 </aside>

 <section class="view">
  <div class="vtitle"><i class="dot"></i><h2>View 1, Model</h2><button aria-label="Minimize view"><i class="mn"></i></button><button aria-label="Maximize view"><i class="mx"></i></button><button class="cl" aria-label="Close view">✕</button></div>
  <div class="vbar">
   <button class="i" aria-label="View attributes"><svg><use href="#v1"/></svg></button><i class="dn"></i><button class="i" aria-label="Display style"><svg><use href="#v2"/></svg></button><button class="i" aria-label="Brightness"><svg><use href="#sun"/></svg></button><i class="dn"></i><i class="sep"></i><button class="i" aria-label="Update view"><svg><use href="#brush"/></svg></button><button class="i" aria-label="Zoom in"><svg><use href="#zin"/></svg></button><button class="i" aria-label="Zoom out"><svg><use href="#zin"/></svg></button><button class="i" aria-label="Window area"><svg><use href="#fit"/></svg></button><button class="i" aria-label="Fit view"><svg><use href="#fit2"/></svg></button><button class="i" aria-label="Rotate view"><svg><use href="#rotv"/></svg></button><button class="i" aria-label="Pan view"><svg><use href="#hand"/></svg></button><i class="sep"></i><button class="i" aria-label="View previous"><svg><use href="#prev"/></svg></button><button class="i" aria-label="View next"><svg><use href="#prev"/></svg></button><i class="sep"></i><button class="i" aria-label="Copy view"><svg><use href="#bars"/></svg></button><button class="i" aria-label="Clip volume"><svg><use href="#brush"/></svg></button><button class="i" aria-label="Clip mask"><svg><use href="#v1"/></svg></button>
  </div>
  <div class="canvas">
   <svg class="plan">
    <g transform="translate(-154 -89)">
     <path class="frame" d="M154 92.500H856.500V515M302.500 92V457M645.500 92V457M154 457.500H856.500M874.500 89V515"/>
     <path class="frame" d="M154 186.500L239 186L234 248L229 313L225 371L218 375L211 380L154 378M154 280.500h13"/>
     <g class="road">
      <path d="M353 157V191L357 280L366 376.500L368.500 378L371 409"/>
      <path d="M361 157V187L365 280L377 409"/>
      <path stroke-dasharray="12 3 5 3" d="M369 157L373 280L383 409"/>
      <path d="M377 157V215L381 280L390 408"/>
      <path d="M385 157L386 186"/>
      <path stroke-dasharray="7 3" d="M398 156L398 195L402 280L412 408"/>
      <path d="M400 408V387L413 380L569 384.500L573 377L570 371"/>
     </g>
     <g class="nodes">
      <path class="frame" d="M484 217.500h28M484 280.500h28M484 343.500h28"/>
      <text x="460" y="221">LUC</text><text x="486" y="215">338-1</text><text x="484" y="228">1165.0</text>
      <text x="460" y="283">LUC</text><text x="486" y="277">338-2</text><text x="484" y="290">1167,4</text>
      <text x="460" y="347">LUC</text><text x="486" y="341">338-3</text><text x="484" y="354">1132,1</text>
     </g>
     <g class="mark">
      <path fill="none" stroke="#c3cccc" stroke-width="3" d="M449 279L486 257M519 263L553 262M557 265L577 280"/>
      <path d="M467 256h7v8l-7 4zM486 254L534 278H521zM517 262h38l-18 9zM485 266h3v3h-3zM489 266h3v3h-3zM485 270h3v3h-3zM489 270h3v3h-3zM447 280l8-3h20l-3 2z"/>
      <circle cx="493" cy="308" r="2"/><circle cx="499" cy="294" r="7"/>
      <text class="mart" x="512" y="286">MART</text>
      <text class="brand" x="446" y="301">muonnha</text>
     </g>
     <path class="parcel" d="M386 187L582 185.500L578 248L574 312L570 371L563 375L555 380L411 374L397 368L394 358L390 310L385 247.500L384 240L386 187M385 247.500L578 248M390 310L574 312"/>
     <g class="nodes">
      <path stroke="#f4ffff" stroke-width="3" stroke-linecap="round" d="M386 187h0M582 186h0M578 248h0M574 312h0M570 371h0M563 375h0M555 380h0M411 374h0M397 368h0M394 358h0M390 310h0M385 248h0M384 240h0M238 186h0M234 248h0M229 313h0M225 371h0M218 375h0M211 380h0"/>
      <text x="386" y="184">13'</text><text x="585" y="185">1'</text><text x="387" y="243">12'</text><text x="386" y="258">11'</text><text x="580" y="258">2'</text><text x="391" y="320">10'</text><text x="576" y="322">3'</text><text x="397" y="355">9'</text><text x="399" y="367">8'</text><text x="412" y="371">7'</text><text x="546" y="378">6'</text><text x="555" y="372">5'</text><text x="573" y="371">4'</text>
      <text x="242" y="184">1</text><text x="239" y="253">2</text><text x="235" y="317">3</text><text x="229" y="380">4</text><text x="219" y="386">5</text><text x="210" y="393">6</text>
      <text x="154" y="276">8-1</text><text x="154" y="290">8,5</text>
     </g>
     <g class="head">
      <text x="315" y="112">b) Sơ đồ sau tách/ hợp thửa đất</text>
      <text x="750" y="109" text-anchor="middle">c) Độ dài cạnh thửa đất sau tách</text>
      <text x="750" y="121" text-anchor="middle">thửa đất, hợp thửa đất</text>
      <text x="154" y="475">i, mốc giới các thửa đất sau tách, hợp thửa):</text>
      <text x="373" y="498">* Thửa đất số 202-1:</text>
      <text x="157" y="515">theo GCN QSDĐ, ranh rào</text>
      <text x="382" y="518">Từ điểm 1 đến điểm 20: Ranh theo GCN QSDĐ, ranh rào</text>
     </g>
    </g>
   </svg>
   <table class="edges one"><colgroup><col class="a"><col class="b2"><col class="a"><col class="b2"></colgroup>
    <thead><tr><th>Đoạn</th><th>Chiều<br>dài (m)</th><th>Đoạn</th><th>Chiều<br>dài (m)</th></tr></thead>
    <tbody>
    <tr><td>1' - 2'</td><td>19,49</td><td></td><td></td></tr><tr><td>2' - 3'</td><td>20,08</td><td></td><td></td></tr><tr><td>3' - 4'</td><td>18,50</td><td></td><td></td></tr><tr><td>4' - 5'</td><td>2,28</td><td></td><td></td></tr><tr><td>5' - 6'</td><td>2,98</td><td></td><td></td></tr><tr><td>6' - 7'</td><td>44,95</td><td></td><td></td></tr><tr><td>7' - 8'</td><td>4,78</td><td></td><td></td></tr><tr><td>8' - 9'</td><td>3,18</td><td></td><td></td></tr><tr><td>9' - 10'</td><td>15,16</td><td></td><td></td></tr><tr><td>10' - 11'</td><td>19,66</td><td></td><td></td></tr><tr><td>11' - 12'</td><td>2,39</td><td></td><td></td></tr><tr><td>12' - 13'</td><td>16,57</td><td></td><td></td></tr><tr><td>13' - 1'</td><td>61,03</td><td></td><td></td></tr><tr><td>11' - 2'</td><td>60,13</td><td></td><td></td></tr><tr><td>10' - 3'</td><td>57,11</td><td></td><td></td></tr>
    </tbody></table>
   <table class="edges two"><colgroup><col class="a"><col class="b2"><col class="a"><col class="b2"></colgroup>
    <thead><tr><th>Đoạn</th><th>Chiều<br>dài (m)</th><th>Đoạn</th><th></th></tr></thead>
    <tbody>
    <tr><td></td><td></td><td></td><td></td></tr><tr><td></td><td></td><td></td><td></td></tr><tr><td></td><td></td><td></td><td></td></tr><tr><td></td><td></td><td></td><td></td></tr><tr><td></td><td></td><td></td><td></td></tr><tr><td></td><td></td><td></td><td></td></tr><tr><td></td><td></td><td></td><td></td></tr><tr><td></td><td></td><td></td><td></td></tr><tr><td></td><td></td><td></td><td></td></tr><tr><td></td><td></td><td></td><td></td></tr><tr><td></td><td></td><td></td><td></td></tr><tr><td></td><td></td><td></td><td></td></tr><tr><td></td><td></td><td></td><td></td></tr><tr><td></td><td></td><td></td><td></td></tr><tr><td></td><td></td><td></td><td></td></tr>
    </tbody></table>
   <div class="dialog" role="dialog" aria-label="Element Selection">
    <div class="dt"><svg><use href="#attach"/></svg><span>Element...</span><button aria-label="Minimize dialog">─</button><button class="off" aria-label="Maximize dialog">□</button><button aria-label="Close dialog">✕</button></div>
    <div class="dr1"><div><button class="i on" aria-label="Individual"><svg><use href="#s6"/></svg></button><button class="i" aria-label="Block select"><svg><use href="#rect"/></svg></button><button class="i" aria-label="Shape select"><svg><use href="#para"/></svg></button><button class="i" aria-label="Circle select"><svg><use href="#circ"/></svg></button><button class="i" aria-label="Line select"><svg><use href="#line"/></svg></button></div><svg><use href="#circx"/></svg></div>
    <div class="dr1"><div><button class="i on" aria-label="New"><svg><use href="#s1"/></svg></button><button class="i" aria-label="Add"><svg><use href="#bplus"/></svg></button><button class="i" aria-label="Subtract"><svg><use href="#pill"/></svg></button><button class="i" aria-label="Invert"><svg><use href="#d4view"/></svg></button><button class="i" aria-label="Select all"><svg><use href="#earth"/></svg></button></div><svg><use href="#cur"/></svg><i class="dn"></i></div>
   </div>
  </div>
 </section>

 <div class="side">
  <i class="hg"></i>
  <button class="i" aria-label="Modify element"><svg><use href="#side7"/></svg></button><button class="i" aria-label="Break"><svg><use href="#xr"/></svg></button><button class="i" aria-label="Extend"><svg><use href="#line"/></svg></button><button class="i" aria-label="Extend two"><svg><use href="#xx"/></svg></button><button class="i" aria-label="Extend to"><svg><use href="#yy"/></svg></button><button class="i" aria-label="Trim"><svg><use href="#hash"/></svg></button><button class="i" aria-label="Trim to"><svg><use href="#rt1"/></svg></button><button class="i" aria-label="Insert vertex"><svg><use href="#rt2"/></svg></button><button class="i" aria-label="Fillet"><svg><use href="#fil"/></svg></button><button class="i" aria-label="Blend"><svg><use href="#star4"/></svg></button><button class="i" aria-label="Chamfer"><svg><use href="#fil"/></svg></button>
  <i class="hg"></i>
  <button class="i" aria-label="Copy"><svg><use href="#cp"/></svg></button><button class="i" aria-label="Move"><svg><use href="#cp"/></svg></button><button class="i" aria-label="Scale"><svg><use href="#cp"/></svg></button><button class="i" aria-label="Rotate"><svg><use href="#rotc"/></svg></button><button class="i" aria-label="Mirror"><svg><use href="#mirr"/></svg></button><button class="i" aria-label="Array"><svg><use href="#arr"/></svg></button><button class="i" aria-label="Align"><svg><use href="#pattm"/></svg></button><button class="i" aria-label="Stretch"><svg><use href="#cp"/></svg></button><button class="i" aria-label="Parallel"><svg><use href="#yy"/></svg></button><button class="i" aria-label="Offset"><svg><use href="#bars"/></svg></button>
 </div>
</main>

<div class="row nav">
 <div class="bar">
  <i class="grip"></i><button class="i" aria-label="Back"><svg><use href="#back"/></svg></button><i class="dn"></i><button class="i" aria-label="Forward"><svg><use href="#fwd"/></svg></button><i class="dn"></i><button class="i" aria-label="ACS"><svg><use href="#acs"/></svg></button><i class="dn"></i>
  <div class="mv"><svg><use href="#views"/></svg><select aria-label="View group"><option>Model Views</option></select></div>
  <button class="i vw" aria-label="Manage views"><svg><use href="#views"/></svg></button>
  <div class="vn"><button class="sel">1</button><button>2</button><button>3</button><button>4</button><button>5</button><button>6</button><button>7</button><button>8</button></div>
 </div>
 <div class="bar"><i class="grip"></i><label class="xy" for="x">X</label><input class="co" id="x" value="460879.805:0.5105"><i class="sep"></i><label class="xy" for="y">Y</label><input class="co" id="y" value="1222454.146:0.9108"></div>
 <div class="bar"><i class="grip"></i><select class="key" aria-label="Key-in"><option></option></select><button class="i" aria-label="Run"><svg><use href="#send"/></svg></button><button class="i" aria-label="Browse"><svg><use href="#filt"/></svg></button><i class="dn"></i></div>
</div>

<footer class="status"><p>Element Selection &gt; Identify element to add to set</p><i class="grip"></i><span class="msg"></span>
 <span class="c"><svg><use href="#snap"/></svg></span><span class="c"><svg><use href="#lock"/></svg></span><span class="lv">Level 1</span><span class="e"></span><span class="c"></span><span class="c"></span><span class="c"><svg><use href="#page"/></svg></span><span class="c"><svg><use href="#prev"/></svg></span><span class="c"><svg><use href="#home"/></svg></span><span class="c"></span><span class="c"><svg><use href="#attach"/></svg></span>
</footer>
<div class="taskbar">
 <button aria-label="Start"><svg><use href="#win"/></svg></button><button aria-label="Search"><svg><use href="#srch"/></svg></button><button aria-label="Copilot"><svg><use href="#cop"/></svg></button><button class="run" aria-label="Edge"><svg><use href="#edge"/></svg></button><button class="run" aria-label="Explorer"><svg><use href="#fold"/></svg></button><button aria-label="Unikey"><svg><use href="#uni"/></svg></button><button class="run act" aria-label="MicroStation"><svg><use href="#ms"/></svg></button><button class="run" aria-label="AutoCAD"><svg><use href="#acad"/></svg></button><button class="run" aria-label="Zalo"><svg><use href="#zalo"/></svg></button>
 <div class="tray"><svg class="s10"><path fill="none" stroke="#222" stroke-width="1" d="M2 6l3-3 3 3"/></svg><svg class="s10"><use href="#tray"/></svg><span>ENG</span><svg class="s10"><use href="#net"/></svg><svg class="s10"><use href="#mute"/></svg><time>1:51 PM<br>04/06/26</time></div>
</div>
</body>
</html>
```
FILE: styles.css
```css
* { box-sizing: border-box; }
body {
  margin: 0;
  min-height: 100vh;
  display: flex;
  flex-direction: column;
  background: #f0efef;
  color: #222;
  font: 6px/8px "Open Sans", "Noto Sans", sans-serif;
}
button, input, select {
  font: inherit;
  color: inherit;
  margin: 0;
  padding: 0;
  border: 0;
  background: none;
  border-radius: 0;
}
select { appearance: none; }
h1, h2, p { margin: 0; font: inherit; }
i { font-style: normal; }
svg { display: block; flex: none; }
.sprite { display: none; }
.s10 { width: 10px; height: 10px; }

/* icon strokes */
.b { stroke: #4683ad; fill: none; }
.k { stroke: #3c4248; fill: none; }
.g { stroke: #6c7b85; fill: none; }
.r { stroke: #a0404a; fill: none; }
.dr { stroke: #8d3b44; fill: none; stroke-width: 1.5px; }
.num { font: bold 9px "Liberation Sans", sans-serif; fill: #1f5596; }
.ta { font-family: "Liberation Serif", serif; font-weight: bold; fill: #a3232d; }
.tb { font-family: "Liberation Serif", serif; font-weight: bold; fill: #3d82a8; }
.tm { font-family: "Liberation Serif", serif; font-weight: bold; fill: #9a2a80; }
.zt { font: bold 6px "Liberation Sans", sans-serif; fill: #1f6fd0; }

.titlebar {
  display: flex;
  align-items: center;
  height: 12px;
  padding-left: 1px;
  gap: 2px;
  background: linear-gradient(90deg, #eef3fa, #e9f3fd 40%, #f4f6fb);
}
.titlebar h1 { font: 7px/10px Roboto, sans-serif; }
.winbtns { margin-left: auto; display: flex; }
.winbtns button { width: 24px; font: 7px/10px "DejaVu Sans", sans-serif; }
.menubar { display: flex; gap: 5px; height: 12px; padding: 3px 9px 1px; }
.menubar a { color: inherit; text-decoration: none; }

.row { display: flex; height: 18px; }
.bar {
  display: flex;
  align-items: center;
  height: 17px;
  background: linear-gradient(#fdfdfd, #e6e6e6);
}
.last { padding-right: 2px; }
.last .sep { margin: 0 2px; }
.grip { width: 4px; height: 11px; flex: none; border-left: 1px dotted #999; margin-left: 1px; }
.i { display: flex; justify-content: center; align-items: center; width: 15px; height: 15px; flex: none; }
.i svg { width: 13px; height: 13px; }
.i.w { width: 17px; }
.on { background: #fbc368; box-shadow: inset 0 0 0 1px #d9a44e; }
.brown { background: #c4a484; box-shadow: inset 0 0 0 1px #ab8a66; }
.gap { margin-right: 4px; }
.dn { width: 8px; flex: none; display: flex; justify-content: center; }
.dn::before { content: ""; border: 2px solid transparent; border-top-color: #111; border-bottom: 0; }
.sep { width: 1px; height: 13px; margin: 0 1px; background: #bbb; flex: none; }
.lvl {
  width: 70px;
  height: 12px;
  margin: 0 5px 0 3px;
  padding-left: 3px;
  border: 1px solid #ddd;
  background: linear-gradient(#222, #222) 63px 5px / 4px 1px no-repeat, linear-gradient(#222, #222) 64px 6px / 2px 1px no-repeat, #fff;
}
.attr { display: flex; align-items: center; width: 38px; height: 15px; border-right: 1px solid #ddd; }
.attr svg { width: 13px; height: 12px; }
.attr span { flex: 1; text-align: center; }

.work { flex: 1; display: flex; min-height: 457px; }
.panel {
  width: 149px;
  flex: none;
  display: flex;
  flex-direction: column;
  border: solid #b9bedd;
  border-width: 0 2px 0 1px;
}
.phead { display: flex; align-items: center; height: 11px; gap: 2px; background: #dce3f1; padding-right: 1px; }
.phead h2 { flex: 1; }
.phead button { width: 6px; font: 7px/8px "DejaVu Sans", sans-serif; }
.phead svg { width: 6px; height: 7px; }
.combo { display: flex; align-items: center; height: 13px; margin: 2px 1px 3px; padding-left: 3px; border: 1px solid #d5dbe5; background: #fff; }
.combo svg { width: 8px; height: 8px; }
.combo select { flex: 1; padding-left: 2px; background: linear-gradient(#222, #222) right 4px top 4px / 4px 1px no-repeat, linear-gradient(#222, #222) right 5px top 5px / 2px 1px no-repeat; }
.nine { display: flex; align-items: center; height: 20px; padding-left: 3px; background: #fff; margin-bottom: 2px; }
.acc {
  display: flex;
  align-items: center;
  gap: 4px;
  height: 12px;
  flex: none;
  margin: 0 1px 3px;
  padding: 0 3px 0 2px;
  border: 1px solid #c8c8c8;
  border-radius: 2px;
  background: linear-gradient(#f2f2f2, #d5d5d5);
  font-weight: 600;
}
.acc svg { width: 8px; height: 8px; }
.acc span, .acc b { flex: 1; text-align: left; }
.acc b { font-size: 7px; }
.acc svg.m { width: 7px; height: 7px; }
.acc.open { margin-bottom: 1px; border-color: #cbe6f4; background: linear-gradient(90deg, #f2fbff, #a8dcf2); }
.cv { width: 4px; height: 4px; border: solid #111; border-width: 0 2px 2px 0; transform: rotate(45deg); margin: 0 2px 2px; }
.cv.up { transform: rotate(225deg); margin: 2px 2px 0; }
.tasks { margin: 0 1px 5px 3px; background: #fff; }
.t { display: flex; min-height: 16px; }
.t kbd { width: 8px; display: flex; align-items: center; justify-content: center; background: #a9c7f5; font: inherit; }
.t div { width: 122px; flex: none; display: flex; flex-wrap: wrap; margin-left: 1px; border-bottom: 1px solid #ddd; flex-grow: 1; padding-right: 12px; }
.t .i svg { width: 12px; height: 12px; }
.tabs { display: flex; align-items: flex-end; margin-top: auto; padding-left: 3px; border-top: 1px solid #ddd; }
.tabs button { display: flex; align-items: center; gap: 2px; height: 11px; padding: 0 3px; border: 1px solid #bbb; border-top: 0; }
.tabs .sel { background: #fff; }
.tabs svg { width: 8px; height: 8px; }

.view {
  flex: 1;
  min-width: 0;
  display: flex;
  flex-direction: column;
  margin: 1px 3px 0 3px;
  border: 2px solid #5f7890;
  border-top-color: #9aa4ac;
  background: #f3f4f6;
}
.vtitle { display: flex; align-items: center; gap: 2px; height: 14px; padding: 0 2px 0 4px; background: linear-gradient(90deg, #c6d3e6, #aac4e6 50%, #bdd1ea); }
.vtitle h2 { flex: 1; padding-left: 3px; }
.dot { width: 4px; height: 3px; background: #333; }
.vtitle button { width: 16px; height: 9px; border: 1px solid #8095ad; background: linear-gradient(#dde8f4, #a4b9d2); display: flex; align-items: center; justify-content: center; }
.vtitle .cl { background: linear-gradient(#e0907f, #c43f2c); border-color: #9a4335; color: #fff; }
.mn { width: 6px; height: 3px; border: 1px solid #555; background: #fff; }
.mx { width: 6px; height: 5px; border: 1px solid #555; background: #fff; }
.vbar { display: flex; align-items: center; height: 12px; background: #f1f2f4; }
.vbar .i { width: 12px; height: 11px; }
.vbar .i svg { width: 9px; height: 9px; }
.canvas { flex: 1; position: relative; overflow: hidden; background: #57abb3; border-bottom: 1px solid #d7eeee; }
.plan { position: absolute; inset: 0; width: 100%; height: 100%; font-family: "Liberation Serif", serif; }
.frame { fill: none; stroke: #bfe4e2; stroke-width: 1px; }
.road path { fill: none; stroke: #2449b8; stroke-width: 1px; }
.parcel { fill: none; stroke: #c9e85c; stroke-width: 1px; }
.nodes text { font-size: 11px; fill: #f1fdfd; }
.head text { font-size: 14px; fill: #f1fdfd; }
.mark { fill: #c3cccc; opacity: .85; }
.brand { font: bold 25px "DejaVu Sans", sans-serif; }
.mart { font: italic bold 18px "Liberation Sans", sans-serif; fill: #86c3c9; }

.edges {
  position: absolute;
  top: 45px;
  height: 314px;
  width: 197px;
  table-layout: fixed;
  border-collapse: collapse;
  font: 11px/11px "Liberation Serif", serif;
  color: #f1fdfd;
}
.edges .a { width: 46px; }
.edges .b2 { width: 52px; }
.edges th, .edges td { border: 1px solid #bfe4e2; padding: 0; font-weight: normal; white-space: nowrap; }
.edges th { height: 24px; text-align: center; }
.edges td { padding-left: 7px; }
.edges td + td { padding-left: 8px; }
.one { left: 500px; }
.two { left: 734px; }

.dialog {
  position: absolute;
  left: 4px;
  top: 1px;
  width: 114px;
  padding: 1px 2px 3px 2px;
  border-radius: 3px;
  background: #f5f5f5;
  box-shadow: 0 1px 3px #3a6a70;
}
.dt { display: flex; align-items: center; height: 14px; color: #8a8a8a; }
.dt svg { width: 8px; height: 8px; }
.dt span { flex: 1; padding-left: 3px; }
.dt button { width: 24px; font: 7px/9px "DejaVu Sans", sans-serif; }
.dt .off { color: #d5d5d5; }
.dr1 { display: flex; align-items: center; height: 15px; padding-left: 10px; }
.dr1 div { display: flex; width: 58px; margin-right: 9px; border-top: 1px solid #ccc; }
.dr1 .i { width: 11px; height: 12px; }
.dr1 .i svg { width: 9px; height: 9px; }
.dr1 > svg { width: 11px; height: 11px; }
.dr1 .dn { margin-left: 8px; }

.side { width: 16px; flex: none; background: linear-gradient(90deg, #fafafa, #e2e2e2); align-self: flex-start; padding-top: 1px; }
.hg { display: block; height: 3px; margin: 0 3px; border-top: 1px dotted #999; }
.side .i svg { width: 12px; height: 12px; }
.side .i + .hg { height: 4px; margin-top: 4px; }

.nav { height: 19px; padding-top: 1px; }
.mv { display: flex; align-items: center; width: 67px; height: 12px; margin-right: 5px; background: #fff; border: 1px solid #ddd; }
.mv svg { width: 9px; height: 9px; }
.mv select { flex: 1; padding-left: 3px; background: linear-gradient(#222, #222) right 3px top 4px / 4px 1px no-repeat, linear-gradient(#222, #222) right 4px top 5px / 2px 1px no-repeat; }
.vw { margin-right: 2px; }
.vn { display: flex; margin-right: 5px; border-left: 1px solid #666; }
.vn button { width: 7px; height: 11px; border: 1px solid #666; border-left: 0; background: #eee; }
.vn .sel { background: #f5ad58; }
.xy { font: bold 9px/10px "Liberation Sans", sans-serif; padding: 0 5px 0 6px; }
.co { width: 73px; height: 10px; padding-left: 2px; border: 1px solid #ccc; background: #fff; color: #888; }
.co + .sep { margin: 0 4px; }
.nav .bar + .bar + .bar { margin-left: 7px; }
.key { width: 216px; height: 11px; margin-right: 4px; border: 1px solid #ccc; background: linear-gradient(#555, #555) right 3px center / 4px 1px no-repeat, linear-gradient(#ccc, #ccc) right 9px top / 1px 100% no-repeat, #fff; }

.status { display: flex; height: 14px; border-top: 1px solid #c9c9c9; align-items: center; background: #f1f1f1; }
.status p { width: 210px; padding-left: 1px; font-family: "Liberation Sans", sans-serif; }
.msg { flex: 1; }
.c, .lv, .e { height: 12px; border: solid #bbb; border-width: 1px 0 0 1px; display: flex; align-items: center; justify-content: center; }
.c { width: 15px; }
.c svg { width: 9px; height: 9px; }
.lv { width: 62px; justify-content: flex-start; padding-left: 1px; }
.e { width: 56px; }

.taskbar { display: flex; align-items: center; height: 25px; padding-left: 5px; background: #d2e8f2; }
.taskbar button { position: relative; width: 23px; height: 22px; margin-right: 1px; display: flex; align-items: center; justify-content: center; border-radius: 3px; }
.taskbar button svg { width: 13px; height: 13px; }
.run::after { content: ""; position: absolute; bottom: 0; width: 4px; height: 1px; background: #6a7d88; }
.act { background: #eef7fb; }
.act::after { width: 8px; background: #1b75b8; }
.tray { margin-left: auto; display: flex; align-items: center; gap: 6px; padding-right: 10px; }
.tray .s10 + .s10 { margin-left: 0; }
.tray time { text-align: right; padding-left: 2px; }
```
